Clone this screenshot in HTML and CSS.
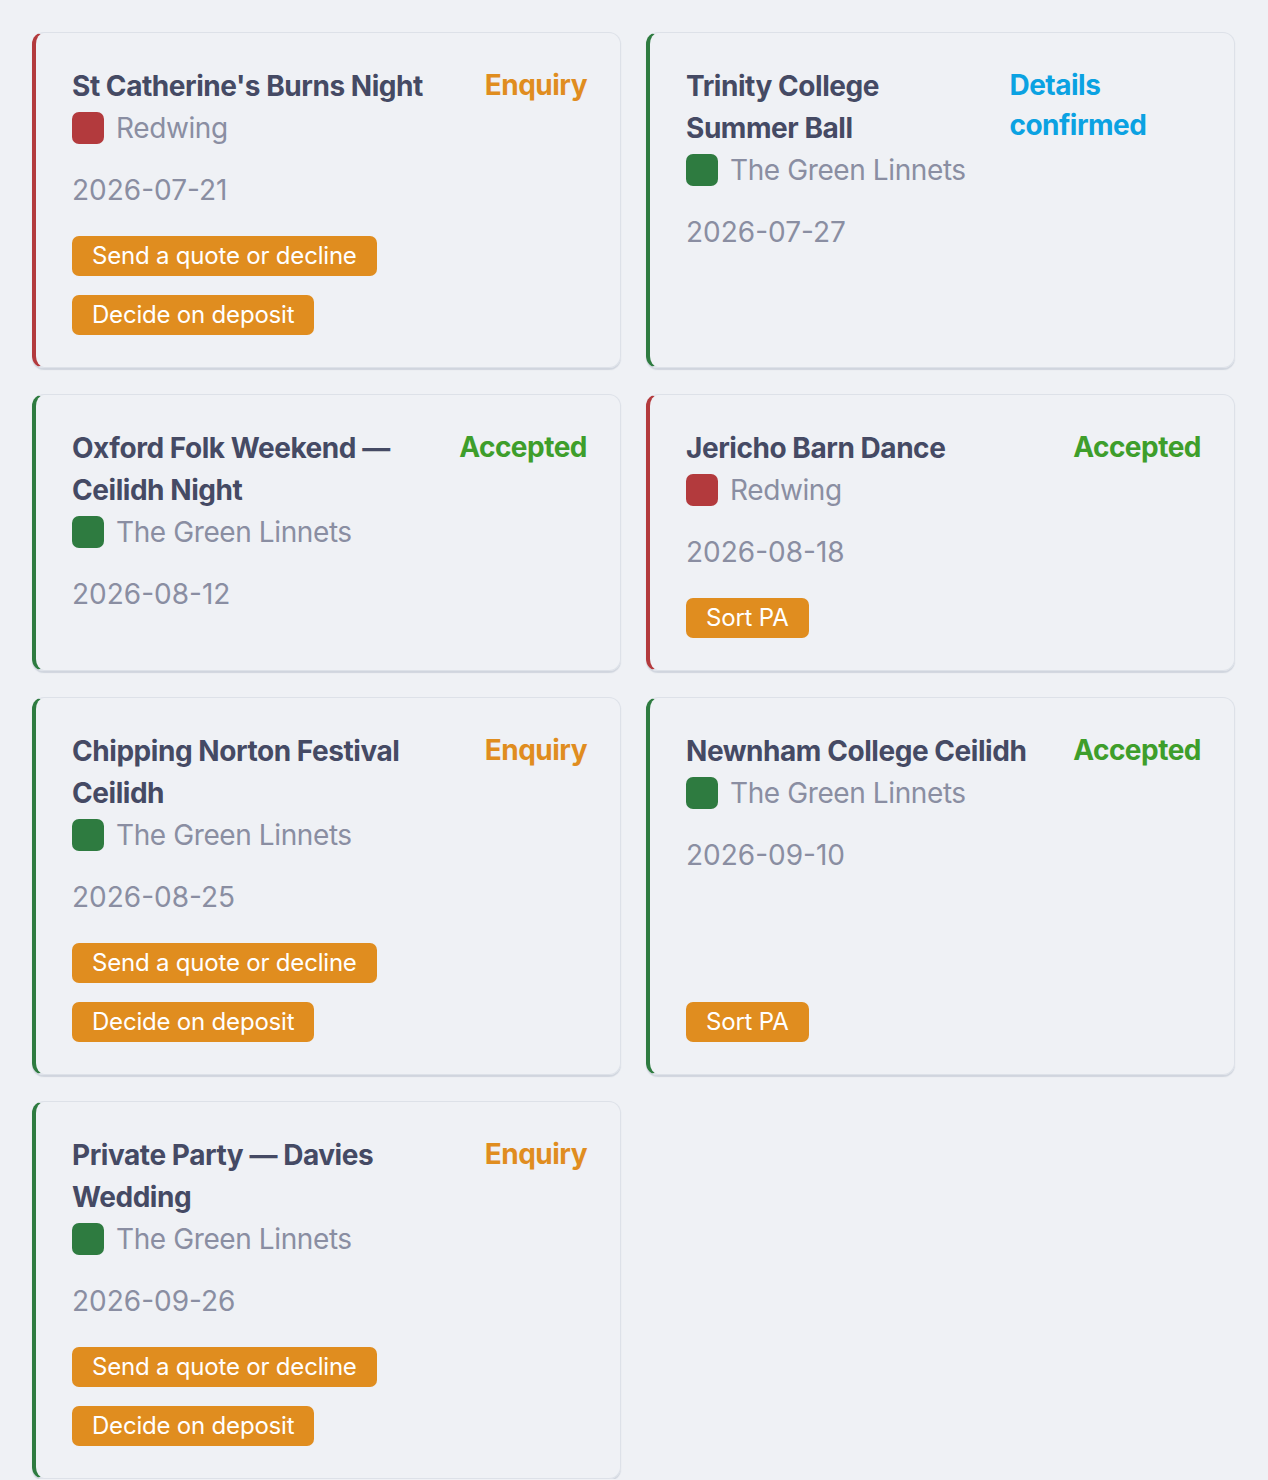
FILE: index.html
```html
<!DOCTYPE html>
<html lang="en">
<head>
    <meta charset="UTF-8">
    <meta name="viewport" content="width=device-width, initial-scale=1.0">
    <title>Gigs</title>
    <link rel="stylesheet" href="styles.css">
</head>
<body>
    <div class="gig-grid">
        <!-- Row 1 -->
        <div class="gig-card band-red">
            <div class="gig-head">
                <h3 class="gig-title">St Catherine's Burns Night</h3>
                <span class="gig-status status-enquiry">Enquiry</span>
            </div>
            <div class="gig-band"><span class="band-dot"></span>Redwing</div>
            <div class="gig-date">2026-07-21</div>
            <div class="gig-tasks">
                <span class="task">Send a quote or decline</span>
                <span class="task">Decide on deposit</span>
            </div>
        </div>

        <div class="gig-card band-green">
            <div class="gig-head">
                <h3 class="gig-title">Trinity College Summer Ball</h3>
                <span class="gig-status status-confirmed">Details confirmed</span>
            </div>
            <div class="gig-band"><span class="band-dot"></span>The Green Linnets</div>
            <div class="gig-date">2026-07-27</div>
        </div>

        <!-- Row 2 -->
        <div class="gig-card band-green">
            <div class="gig-head">
                <h3 class="gig-title">Oxford Folk Weekend — Ceilidh Night</h3>
                <span class="gig-status status-accepted">Accepted</span>
            </div>
            <div class="gig-band"><span class="band-dot"></span>The Green Linnets</div>
            <div class="gig-date">2026-08-12</div>
        </div>

        <div class="gig-card band-red">
            <div class="gig-head">
                <h3 class="gig-title">Jericho Barn Dance</h3>
                <span class="gig-status status-accepted">Accepted</span>
            </div>
            <div class="gig-band"><span class="band-dot"></span>Redwing</div>
            <div class="gig-date">2026-08-18</div>
            <div class="gig-tasks">
                <span class="task">Sort PA</span>
            </div>
        </div>

        <!-- Row 3 -->
        <div class="gig-card band-green">
            <div class="gig-head">
                <h3 class="gig-title">Chipping Norton Festival Ceilidh</h3>
                <span class="gig-status status-enquiry">Enquiry</span>
            </div>
            <div class="gig-band"><span class="band-dot"></span>The Green Linnets</div>
            <div class="gig-date">2026-08-25</div>
            <div class="gig-tasks">
                <span class="task">Send a quote or decline</span>
                <span class="task">Decide on deposit</span>
            </div>
        </div>

        <div class="gig-card band-green">
            <div class="gig-head">
                <h3 class="gig-title">Newnham College Ceilidh</h3>
                <span class="gig-status status-accepted">Accepted</span>
            </div>
            <div class="gig-band"><span class="band-dot"></span>The Green Linnets</div>
            <div class="gig-date">2026-09-10</div>
            <div class="gig-tasks">
                <span class="task">Sort PA</span>
            </div>
        </div>

        <!-- Row 4 -->
        <div class="gig-card band-green">
            <div class="gig-head">
                <h3 class="gig-title">Private Party — Davies Wedding</h3>
                <span class="gig-status status-enquiry">Enquiry</span>
            </div>
            <div class="gig-band"><span class="band-dot"></span>The Green Linnets</div>
            <div class="gig-date">2026-09-26</div>
            <div class="gig-tasks">
                <span class="task">Send a quote or decline</span>
                <span class="task">Decide on deposit</span>
            </div>
        </div>
    </div>
</body>
</html>
```

FILE: styles.css
```css
:root {
    --bg: #eff1f5;
    --border: #dde1e8;
    --ink: #454a64;
    --muted: #8a8ea2;
    --red: #b33a3d;
    --green: #2e7b40;
    --orange: #e08d1f;
    --accepted: #3e9e2b;
    --confirmed: #0ba2e2;
}

* {
    margin: 0;
    padding: 0;
    box-sizing: border-box;
}

body {
    background-color: var(--bg);
    font-family: 'Inter', 'Liberation Sans', sans-serif;
    color: var(--ink);
    padding: 32px 33px 0 32px;
}

.gig-grid {
    display: grid;
    grid-template-columns: 1fr 1fr;
    gap: 26px 25px;
}

.gig-card {
    display: flex;
    flex-direction: column;
    align-items: flex-start;
    padding: 32px 33px 32px 36px;
    border: 1px solid var(--border);
    border-left: 4px solid var(--green);
    border-radius: 12px;
    box-shadow: 0 2px 1px rgba(200, 206, 216, 0.8);
}

.gig-card.band-red {
    border-left-color: var(--red);
}

.gig-head {
    display: flex;
    justify-content: space-between;
    gap: 24px;
    width: 100%;
}

.gig-title {
    font-size: 28px;
    line-height: 42px;
    font-weight: 700;
    letter-spacing: -0.45px;
    color: var(--ink);
}

.gig-status {
    font-size: 28px;
    line-height: 40px;
    font-weight: 700;
    letter-spacing: -0.5px;
}

.status-enquiry {
    color: var(--orange);
}

.status-accepted {
    color: var(--accepted);
}

.status-confirmed {
    color: var(--confirmed);
}

.gig-band {
    display: flex;
    align-items: center;
    gap: 12px;
    font-size: 28px;
    line-height: 42px;
    letter-spacing: -0.4px;
    color: var(--muted);
}

.band-dot {
    width: 32px;
    height: 32px;
    border-radius: 7px;
    background-color: var(--green);
    flex-shrink: 0;
}

.band-red .band-dot {
    background-color: var(--red);
}

.gig-date {
    margin-top: 20px;
    font-size: 28px;
    line-height: 42px;
    color: var(--muted);
}

.gig-tasks {
    margin-top: auto;
    padding-top: 25px;
    display: flex;
    flex-direction: column;
    align-items: flex-start;
    gap: 19px;
}

.task {
    background-color: var(--orange);
    color: #fff;
    font-size: 24px;
    line-height: 40px;
    letter-spacing: -0.2px;
    padding: 0 20px;
    border-radius: 7px;
}
```
